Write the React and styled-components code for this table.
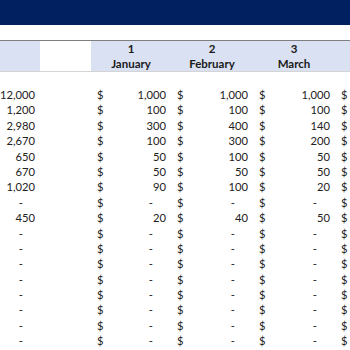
import React from "react";
import styled, { createGlobalStyle } from "styled-components";

const NAVY = "#002060";
const BAND = "#d9e1f2";
const COLS = "40px 51px 80px 82px 82px 1fr";

const totals = [
  "12,000", "1,200", "2,980", "2,670", "650", "670", "1,020", "-", "450",
  "-", "-", "-", "-", "-", "-", "-", "-",
];

const months = [
  { n: 1, name: "January", values: ["1,000", "100", "300", "100", "50", "50", "90", "-", "20"] },
  { n: 2, name: "February", values: ["1,000", "100", "400", "300", "100", "50", "100", "-", "40"] },
  { n: 3, name: "March", values: ["1,000", "100", "140", "200", "50", "50", "20", "-", "50"] },
];

function App() {
  return (
    <>
      <GlobalStyle />
      <Sheet>
        <TitleBar />
        <Gap />
        <HeaderRow>
          <HeadCell />
          <HeadCell $blank />
          {months.map(({ n, name }) => (
            <HeadCell key={n}>
              <span>{n}</span>
              <span>{name}</span>
            </HeadCell>
          ))}
          <HeadCell />
        </HeaderRow>
        <Spacer />
        {totals.map((total, i) => (
          <Row key={i}>
            <Total $dash={total === "-"}>{total}</Total>
            <span />
            {months.map(({ n, values }) => {
              const v = values[i] || "-";
              return (
                <Money key={n}>
                  <span>$</span>
                  <Amount $dash={v === "-"}>{v}</Amount>
                </Money>
              );
            })}
            <Money>
              <span>$</span>
            </Money>
          </Row>
        ))}
      </Sheet>
    </>
  );
}

const GlobalStyle = createGlobalStyle`
  body {
    margin: 0;
    background: #fff;
    font-family: Lato, "Liberation Sans", sans-serif;
    color: #222;
  }
`;

const Sheet = styled.div`
  width: 350px;
  height: 350px;
  overflow: hidden;
`;

const TitleBar = styled.div`
  height: 25px;
  background: ${NAVY};
`;

const Gap = styled.div`
  height: 15px;
  border-bottom: 1px solid #7f7f7f;
`;

const HeaderRow = styled.div`
  display: grid;
  grid-template-columns: ${COLS};
  height: 30px;
  border-bottom: 1px solid #d4d4d4;
`;

const HeadCell = styled.div`
  display: flex;
  flex-direction: column;
  align-items: center;
  background: ${(p) => (p.$blank ? "#fff" : BAND)};
  font-size: 11.5px;
  font-weight: 700;
  line-height: 15px;
  color: #1a1a1a;
`;

const Spacer = styled.div`
  height: 15px;
`;

const Row = styled.div`
  display: grid;
  grid-template-columns: ${COLS};
  height: 15.4px;
  font-size: 11.2px;
  line-height: 15.4px;
`;

const Total = styled.span`
  text-align: right;
  padding-right: ${(p) => (p.$dash ? "17px" : "5px")};
`;

const Money = styled.div`
  display: flex;
  justify-content: space-between;
  padding: 0 5px 0 6px;
`;

const Amount = styled.span`
  text-align: right;
  padding-right: ${(p) => (p.$dash ? "13px" : "0")};
`;

export default App;
